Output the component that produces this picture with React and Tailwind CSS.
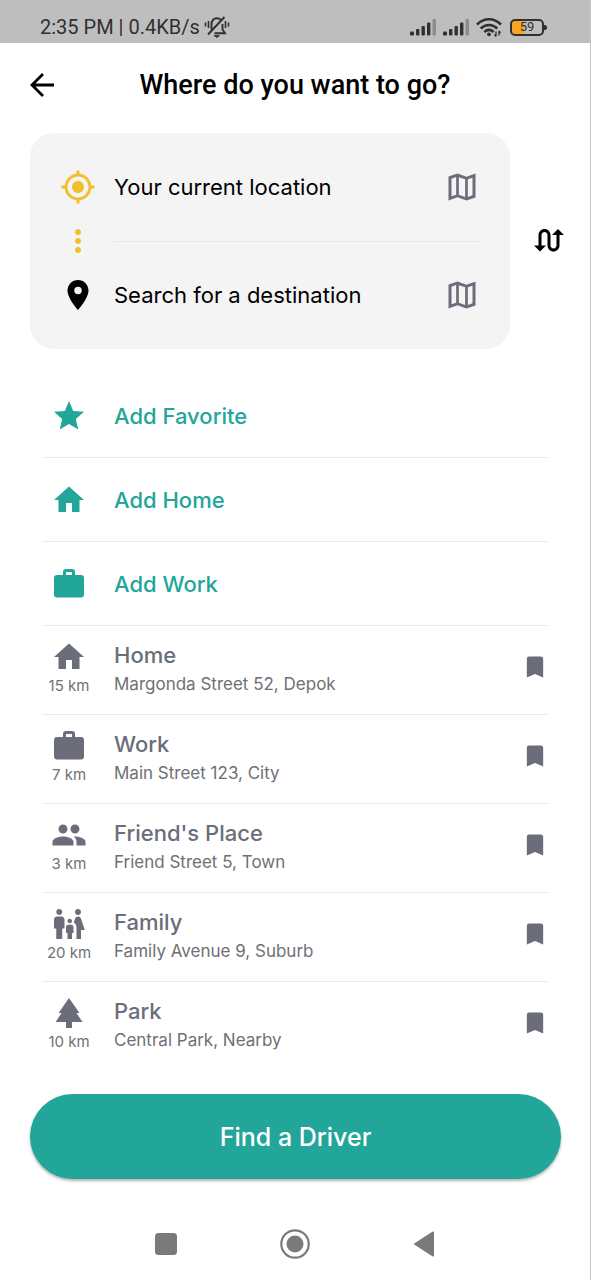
import {
  MdMyLocation,
  MdMoreVert,
  MdLocationOn,
  MdPeople,
  MdFamilyRestroom,
  MdPark,
  MdSwapCalls,
} from "react-icons/md";

function Icon({ d, className, ...rest }) {
  return (
    <svg viewBox="0 0 24 24" fill="currentColor" aria-hidden="true" className={className} {...rest}>
      <path fillRule="evenodd" d={d} />
    </svg>
  );
}

const STAR = "M12 17.27 18.18 21l-1.64-7.03L22 9.24l-7.19-.61L12 2 9.19 8.63 2 9.24l5.46 4.73L5.82 21z";
const HOME = "M10 20v-6h4v6h5v-8h3L12 3 2 12h3v8z";
const CASE =
  "M10 2h4a2 2 0 0 1 2 2v2h4a2 2 0 0 1 2 2v11a2 2 0 0 1-2 2H4a2 2 0 0 1-2-2V8a2 2 0 0 1 2-2h4V4a2 2 0 0 1 2-2m4 4V4h-4v2z";
const BOOKMARK = "M17 3H7a2 2 0 0 0-2 2v16l7-3 7 3V5a2 2 0 0 0-2-2z";
const MAP =
  "M3 5l6-2 6 2.1L21 3v16l-6 2-6-2.1L3 21zM5 6.45v11.7l3.1-1.05V5.4zM9.9 5.42v11.7l4.2 1.47V6.89zM15.9 6.9v11.7l3.1-1.05V5.8z";

const actions = [
  { label: "Add Favorite", icon: STAR },
  { label: "Add Home", icon: HOME },
  { label: "Add Work", icon: CASE },
];

const places = [
  { name: "Home", address: "Margonda Street 52, Depok", distance: "15 km", path: HOME },
  { name: "Work", address: "Main Street 123, City", distance: "7 km", path: CASE },
  { name: "Friend's Place", address: "Friend Street 5, Town", distance: "3 km", Glyph: MdPeople },
  { name: "Family", address: "Family Avenue 9, Suburb", distance: "20 km", Glyph: MdFamilyRestroom },
  { name: "Park", address: "Central Park, Nearby", distance: "10 km", Glyph: MdPark },
];

function Signal() {
  return (
    <svg viewBox="0 0 27 17" className="h-[17px] w-[27px]" aria-hidden="true">
      <g fill="#303030">
        <rect x="0" y="12.5" width="4" height="4" rx="1.3" />
        <rect x="6" y="10" width="3.4" height="6.5" rx="1" />
        <rect x="11.5" y="7" width="3.4" height="9.5" rx="1" />
        <rect x="17" y="3.5" width="3.4" height="13" rx="1" />
      </g>
      <rect x="22.5" y="0" width="3.5" height="16.5" rx="1" fill="#8c8c8c" />
    </svg>
  );
}

function StatusBar() {
  return (
    <div className="flex h-[43px] items-center justify-between bg-[#bebebe] pt-[11px] pr-[43px] pl-10 text-[#303030]">
      <div className="flex items-center gap-1">
        <span className="text-[20px] leading-6">2:35 PM | 0.4KB/s</span>
        <svg viewBox="0 0 26 22" className="h-[22px] w-[26px]" fill="none" stroke="currentColor" strokeWidth="1.9" aria-hidden="true">
          <path d="M7.5 13.5V9C7.5 5 9.5 2.2 13 2.2c1.5 0 2.800.5 3.700 1.500M18.500 8v5.500l2.500 3.700H10.500M4 18.500 20.500 1" />
          <path d="M10 19.5h5.5L12.8 21.5z" fill="currentColor" strokeWidth="0.8" />
          <path d="M1.5 6.5v4M4.5 5v7M21.5 5v7M24.5 6.5v4" strokeWidth="1.6" />
        </svg>
      </div>
      <div className="flex items-center gap-2">
        <div className="flex items-center gap-[6px]">
          <Signal />
          <Signal />
          <svg viewBox="0 0 26 20" className="h-5 w-[26px]" fill="none" stroke="currentColor" strokeWidth="2.6" aria-hidden="true">
            <path d="M1 7.5C8 .5 18 .5 25 7.5M4.7 11.5c5-4.7 11.6-4.7 16.6 0M8.3 15c3-2.6 6.4-2.6 9.4 0" />
            <circle cx="13" cy="17.3" r="1.9" fill="currentColor" stroke="none" />
            <path d="M20 14.5v5M23 14v4.5M18.5 17.5l1.5 2M23 14l1.5 2" strokeWidth="1.3" />
          </svg>
        </div>
        <div className="flex items-center">
          <div className="flex h-[17px] w-[34px] items-center justify-center rounded-[5px] border-2 border-[#303030] bg-linear-to-r from-[#f5a623] from-40% to-transparent to-40% text-[13px] leading-3">
            59
          </div>
          <div className="h-[5px] w-[3px] rounded-r-sm bg-[#303030]" />
        </div>
      </div>
    </div>
  );
}

function LocationField({ id, label, icon }) {
  return (
    <div className="flex h-9 items-center">
      <label htmlFor={id} aria-label={label} className="flex w-9 shrink-0 justify-center">
        {icon}
      </label>
      <input
        id={id}
        type="text"
        placeholder={label}
        className="ml-[18px] h-9 min-w-0 flex-1 bg-transparent text-[22px] text-black outline-none placeholder:text-black"
      />
      <button type="button" aria-label="Pick on map" className="text-[#6b6d7a]">
        <Icon d={MAP} className="size-9" />
      </button>
    </div>
  );
}

export default function App() {
  return (
    <div className="flex min-h-screen flex-col border-r border-[#c6c6c6] bg-white font-['Inter',sans-serif] text-black">
      <div className="font-['Roboto',sans-serif]">
        <StatusBar />
        <header className="grid grid-cols-[24px_1fr_24px] items-center px-[30px] pt-6">
          <button type="button" aria-label="Back">
            <svg viewBox="0 0 24 24" className="size-6" fill="none" stroke="currentColor" strokeWidth="2.8" aria-hidden="true">
              <path d="M24 12H2M13 1 2 12l11 11" />
            </svg>
          </button>
          <h1 className="text-center text-[27px] leading-9 font-medium">Where do you want to go?</h1>
        </header>
      </div>

      <section className="mt-[30px] flex items-center pr-[23px] pl-[30px]">
        <div className="min-w-0 flex-1 rounded-[24px] bg-[#f4f4f4] px-[30px] py-9">
          <LocationField
            id="from"
            label="Your current location"
            icon={<MdMyLocation className="size-9 text-[#f0bf2c]" />}
          />
          <div className="flex h-[72px] items-center">
            <MdMoreVert className="size-9 text-[#f0bf2c]" />
            <div className="ml-[18px] h-px flex-1 bg-[#e8e8e8]" />
          </div>
          <LocationField id="to" label="Search for a destination" icon={<MdLocationOn className="size-9" />} />
        </div>
        <button type="button" aria-label="Swap locations" className="ml-[21px] shrink-0">
          <MdSwapCalls className="size-9" />
        </button>
      </section>

      <main className="mt-[25px] pr-[41px] pl-[42px]">
        {actions.map(({ label, icon }) => (
          <button
            key={label}
            type="button"
            className="flex h-[84px] w-full items-center border-b border-[#ececec] text-left text-[#22a699]"
          >
            <span className="flex w-[54px] justify-center">
              <Icon d={icon} className="size-9" />
            </span>
            <span className="ml-[18px] text-[22px] leading-8 font-medium">{label}</span>
          </button>
        ))}
        <ul>
          {places.map(({ name, address, distance, path, Glyph }) => (
            <li
              key={name}
              className="flex h-[89px] items-start border-b border-[#ececec] pt-[13px] text-[#6b6d7a] last:border-b-0"
            >
              <div className="flex w-[54px] shrink-0 flex-col items-center">
                {path ? <Icon d={path} className="size-9" /> : <Glyph className="size-9" />}
                <span className="text-[15px] leading-[22px] whitespace-nowrap text-[#6f7076]">{distance}</span>
              </div>
              <div className="ml-[18px] flex-1">
                <h2 className="text-[22px] leading-8 font-medium">{name}</h2>
                <p className="text-[17px] leading-[26px] text-[#6f7076]">{address}</p>
              </div>
              <button type="button" aria-label={`Remove ${name} from saved places`} className="mt-[14px]">
                <Icon d={BOOKMARK} className="size-7" />
              </button>
            </li>
          ))}
        </ul>
      </main>

      <div className="mt-[23px] pr-[29px] pl-[30px]">
        <button
          type="button"
          className="h-[85px] w-full rounded-full bg-[#22a699] text-[25px] leading-9 font-medium text-white shadow-[0_2px_3px_rgba(0,0,0,0.3)]"
        >
          Find a Driver
        </button>
      </div>

      <nav className="mt-auto flex h-[72px] items-center justify-center gap-[103px] text-[#7a7a7a]">
        <button type="button" aria-label="Recent apps">
          <svg viewBox="0 0 22 22" className="size-[22px]" fill="currentColor" aria-hidden="true">
            <rect width="22" height="22" rx="3.5" />
          </svg>
        </button>
        <button type="button" aria-label="Home screen">
          <svg viewBox="0 0 30 30" className="size-[30px]" fill="currentColor" aria-hidden="true">
            <circle cx="15" cy="15" r="13.7" fill="none" stroke="currentColor" strokeWidth="2.2" />
            <circle cx="15" cy="15" r="8.5" />
          </svg>
        </button>
        <button type="button" aria-label="Go back">
          <svg viewBox="0 0 22 26" className="h-[26px] w-[22px]" fill="currentColor" aria-hidden="true">
            <path d="M1.5 12.2 19.3.8q1.7-.8 1.7 1v22.4q0 1.8-1.7 1L1.5 13.8q-1.2-.8 0-1.6z" />
          </svg>
        </button>
      </nav>
    </div>
  );
}
